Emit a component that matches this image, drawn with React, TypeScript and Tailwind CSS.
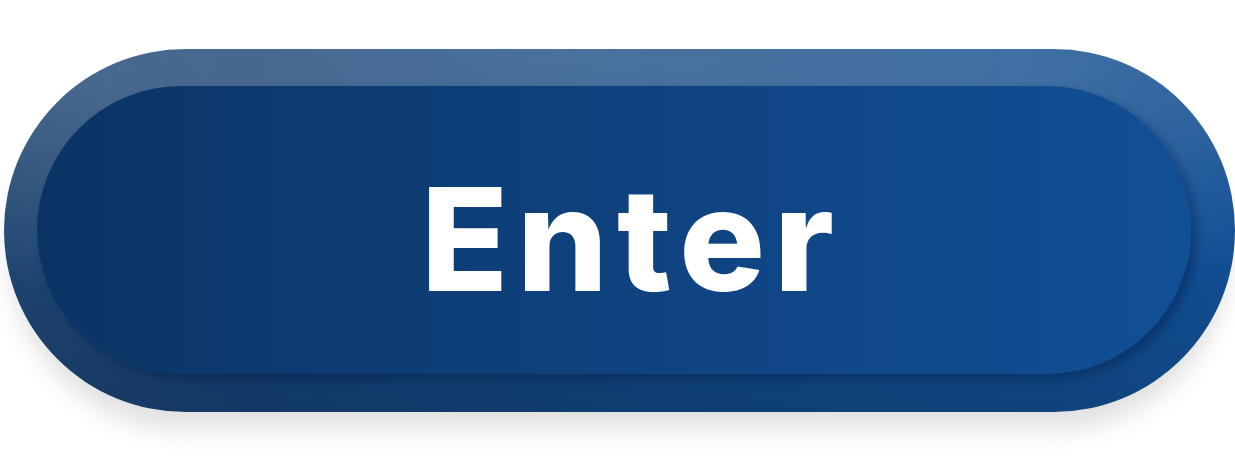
import React from "react";

export default function App() {
  return (
    <div className="w-[1235px] h-[469px] bg-white overflow-hidden">
      <div className="pt-[49px] pl-[4px]">
        <div
          className="w-[1231px] h-[363px] rounded-full pt-[37px] pl-[33px] pr-[44px] pb-[38px] shadow-[0_24px_24px_-6px_rgba(0,0,0,0.12)]"
          style={{
            background:
              "radial-gradient(110% 95% at 45% 0%, rgba(255,255,255,0.24) 0%, rgba(255,255,255,0.2) 35%, rgba(255,255,255,0.08) 60%, rgba(255,255,255,0) 80%), linear-gradient(to bottom, rgba(0,0,0,0) 55%, rgba(0,0,0,0.12) 100%), linear-gradient(to right, #1e4470 0%, #143f72 20%, #11467f 50%, #114f94 100%)",
          }}
        >
          <div
            className="w-full h-full rounded-full flex items-center justify-center pl-[36px] pt-[16px] shadow-[6px_5px_10px_rgba(0,20,60,0.35)]"
            style={{
              background: "linear-gradient(to right, #0b3465 0%, #0e3f79 40%, #104789 70%, #114f94 100%)",
            }}
          >
            <span className="text-white font-['Inter',sans-serif] font-extrabold text-[143px] leading-none tracking-[9px]">
              Enter
            </span>
          </div>
        </div>
      </div>
    </div>
  );
}
